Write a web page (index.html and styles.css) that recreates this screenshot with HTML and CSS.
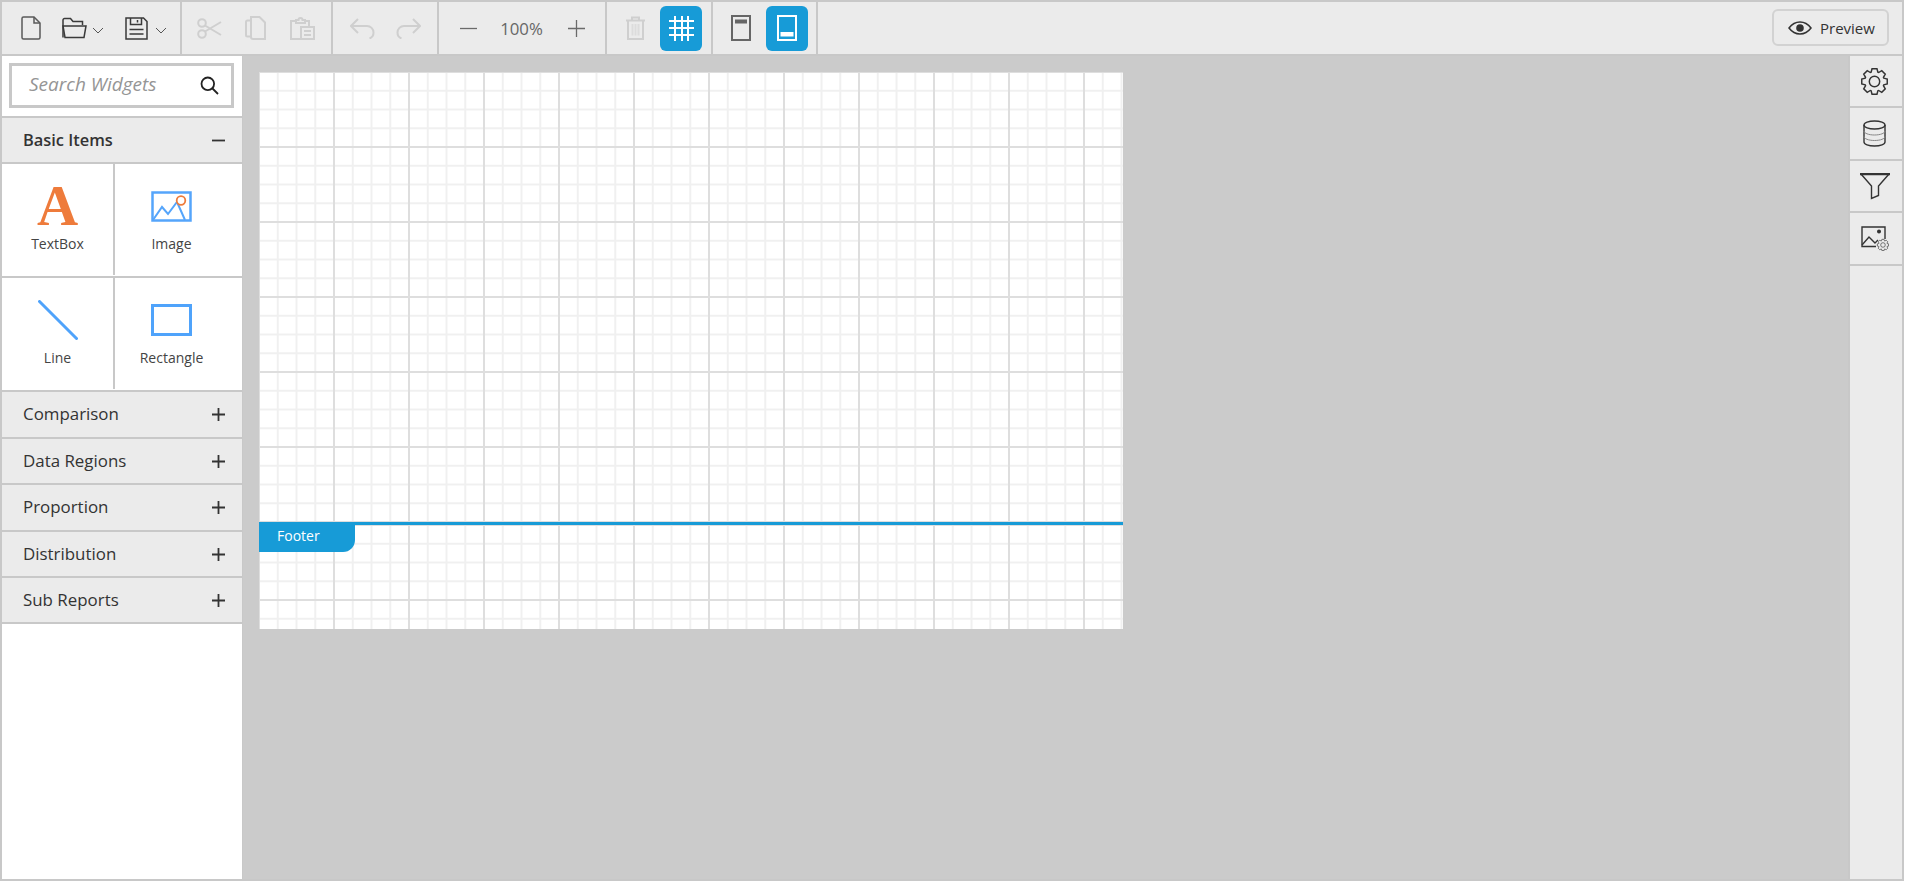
FILE: index.html
```html
<!DOCTYPE html>
<html lang="en">

<head>
    <meta charset="UTF-8">
    <title>Report Designer</title>
    <link rel="stylesheet" href="styles.css">
</head>

<body>
    <div id="app">
        <!--TOOLBAR-->
        <div class="toolbar">
            <div class="tb-group group-file">
                <span class="tb-btn w-new">
                    <svg width="20" height="24" viewBox="0 0 20 24" class="ic-dark"><path d="M2.5 1H13l6 6v14.500a1.500 1.500 0 0 1-1.500 1.500H2.500A1.500 1.500 0 0 1 1 21.500V2.500A1.500 1.500 0 0 1 2.500 1z"/><path d="M13 1v6h6"/></svg>
                </span>
                <span class="tb-btn w-open">
                    <svg width="25" height="22" viewBox="0 0 25 22" class="ic-darker"><path d="M1 20.500V3a1.500 1.500 0 0 1 1.500-1.500h6L11 4.500h9.500V8"/><path d="M1 9h23l-2 11.500H3z"/></svg>
                    <svg width="12" height="7" viewBox="0 0 12 7" class="chev"><path d="M1 1l5 5 5-5"/></svg>
                </span>
                <span class="tb-btn w-save">
                    <svg width="23" height="23" viewBox="0 0 23 23" class="ic-darker"><path d="M1 1h17.500L22 4.500V22H1z"/><path d="M5.500 1v6.500h11V1M12.500 3v2.500"/><path d="M4.500 12.500h14M4.500 17h14"/></svg>
                    <svg width="12" height="7" viewBox="0 0 12 7" class="chev"><path d="M1 1l5 5 5-5"/></svg>
                </span>
            </div>
            <div class="tb-group group-edit">
                <span class="tb-btn w-edit">
                    <svg width="25" height="21" viewBox="0 0 25 21" class="ic-off"><circle cx="5" cy="5" r="3.800"/><circle cx="5" cy="16" r="3.800"/><path d="M8 7.500l16 9.500M8 13.500L24 4"/></svg>
                </span>
                <span class="tb-btn w-edit">
                    <svg width="21" height="24" viewBox="0 0 21 24" class="ic-off"><path d="M6 4.500h-3.500a1.500 1.500 0 0 0-1.500 1.500v13a1.500 1.500 0 0 0 1.500 1.500H6"/><path d="M6 1h8.500L20 6.500V23H8a2 2 0 0 1-2-2z"/></svg>
                </span>
                <span class="tb-btn w-edit">
                    <svg width="25" height="24" viewBox="0 0 25 24" class="ic-off"><path d="M10 23H1V5h5M15 5h4v5"/><path d="M6 7V4h2.500a2 2 0 0 1 4 0H15v3z"/><path d="M11 11h13v12H11zM14 15h7M14 19h7"/></svg>
                </span>
            </div>
            <div class="tb-group group-undo">
                <span class="tb-btn w-edit">
                    <svg width="25" height="21" viewBox="0 0 25 21" class="ic-off"><path d="M8 1L1 8l7 7M1 8h16a6.500 6.500 0 0 1 6.500 6.500c0 3-1.500 5-4 6"/></svg>
                </span>
                <span class="tb-btn w-edit">
                    <svg width="25" height="21" viewBox="0 0 25 21" class="ic-off"><path d="M17 1l7 7-7 7M24 8H8a6.500 6.500 0 0 0-6.500 6.500c0 3 1.500 5 4 6"/></svg>
                </span>
            </div>
            <div class="tb-group group-zoom">
                <span class="tb-btn w-minus">
                    <svg width="17" height="17" viewBox="0 0 17 17" class="ic-mid"><path d="M0 8.500h17"/></svg>
                </span>
                <span class="zoom-value">100%</span>
                <span class="tb-btn w-plus">
                    <svg width="17" height="17" viewBox="0 0 17 17" class="ic-mid"><path d="M0 8.500h17M8.500 0v17"/></svg>
                </span>
            </div>
            <div class="tb-group group-pair">
                <span class="tb-btn w-pair">
                    <svg width="19" height="24" viewBox="0 0 19 24" class="ic-trash"><path d="M0 4.500h19M6 4.500V1.500h7v3M2 4.500V23h15V4.500"/><path class="soft" d="M6.500 8v11.500M9.500 8v11.500M12.500 8v11.500"/></svg>
                </span>
                <span class="tb-btn w-pair active">
                    <svg width="25" height="25" viewBox="0 0 25 25" class="ic-white"><path d="M0 5h25M0 12h25M0 19h25M6 0v25M13 0v25M19 0v25"/></svg>
                </span>
            </div>
            <div class="tb-group group-pair">
                <span class="tb-btn w-pair">
                    <svg width="20" height="26" viewBox="0 0 20 26"><rect x="1" y="1" width="18" height="24" fill="none" stroke="#666" stroke-width="2"/><rect x="4" y="4.500" width="12" height="4" fill="#666"/></svg>
                </span>
                <span class="tb-btn w-pair active">
                    <svg width="20" height="26" viewBox="0 0 20 26"><rect x="1" y="1" width="18" height="24" fill="none" stroke="#fff" stroke-width="2"/><rect x="3.500" y="17" width="13" height="4.500" fill="#fff"/></svg>
                </span>
            </div>
            <div class="preview-btn">
                <svg width="24" height="14" viewBox="0 0 24 14"><path d="M1 7c3-4 7-6 11-6s8 2 11 6c-3 4-7 6-11 6S4 11 1 7z" fill="none" stroke="#333" stroke-width="1.500"/><circle cx="12" cy="7" r="3.800" fill="#333"/></svg>
                <span>Preview</span>
            </div>
        </div>

        <div class="workspace">
            <!--WIDGETS PANEL-->
            <div class="sidebar">
                <div class="search-area">
                    <div class="search-box">
                        <span class="search-text">Search Widgets</span>
                        <svg width="19" height="19" viewBox="0 0 19 19" class="search-icon"><circle cx="7.800" cy="7.800" r="6.300"/><path d="M12.500 12.500l5.500 5.500"/></svg>
                    </div>
                </div>

                <div class="acc-head basic">
                    <span>Basic Items</span>
                    <svg width="13" height="13" viewBox="0 0 13 13" class="acc-icon"><path d="M0 6.500h13"/></svg>
                </div>
                <div class="widget-grid">
                    <div class="widget">
                        <div class="widget-icon"><span class="letter-a">A</span></div>
                        <span>TextBox</span>
                    </div>
                    <div class="widget">
                        <div class="widget-icon">
                            <svg width="41" height="31" viewBox="0 0 41 31"><rect x="1.500" y="1.500" width="38" height="28" fill="none" stroke="#55a5fb" stroke-width="2.500"/><path d="M2 29l9-13 6 7 9-12 8 18" fill="none" stroke="#55a5fb" stroke-width="2"/><circle cx="30" cy="9.500" r="4.300" fill="#fff" stroke="#ee7b3b" stroke-width="1.800"/></svg>
                        </div>
                        <span>Image</span>
                    </div>
                    <div class="widget">
                        <div class="widget-icon">
                            <svg width="40" height="40" viewBox="0 0 40 40"><path d="M1.500 1.500l37 37" stroke="#4fa3fb" stroke-width="3" stroke-linecap="round"/></svg>
                        </div>
                        <span>Line</span>
                    </div>
                    <div class="widget">
                        <div class="widget-icon">
                            <svg width="41" height="32" viewBox="0 0 41 32"><rect x="1.500" y="1.500" width="38" height="29" fill="none" stroke="#4fa3fb" stroke-width="3"/></svg>
                        </div>
                        <span>Rectangle</span>
                    </div>
                </div>

                <div class="acc-head h45">
                    <span>Comparison</span>
                    <svg width="13" height="13" viewBox="0 0 13 13" class="acc-icon"><path d="M0 6.500h13M6.500 0v13"/></svg>
                </div>
                <div class="acc-head h44">
                    <span>Data Regions</span>
                    <svg width="13" height="13" viewBox="0 0 13 13" class="acc-icon"><path d="M0 6.500h13M6.500 0v13"/></svg>
                </div>
                <div class="acc-head h45">
                    <span>Proportion</span>
                    <svg width="13" height="13" viewBox="0 0 13 13" class="acc-icon"><path d="M0 6.500h13M6.500 0v13"/></svg>
                </div>
                <div class="acc-head h44">
                    <span>Distribution</span>
                    <svg width="13" height="13" viewBox="0 0 13 13" class="acc-icon"><path d="M0 6.500h13M6.500 0v13"/></svg>
                </div>
                <div class="acc-head h44">
                    <span>Sub Reports</span>
                    <svg width="13" height="13" viewBox="0 0 13 13" class="acc-icon"><path d="M0 6.500h13M6.500 0v13"/></svg>
                </div>
            </div>

            <!--REPORT CANVAS-->
            <div class="canvas-area">
                <div class="report">
                    <div class="report-body"></div>
                    <div class="report-footer">
                        <div class="footer-tab">Footer</div>
                    </div>
                </div>
            </div>

            <!--RIGHT PANEL-->
            <div class="right-panel">
                <div class="rp-item h50">
                    <svg width="27" height="27" viewBox="0 0 26 26" class="ic-line"><g id="gear"><polygon transform="translate(13 13)" points="8.930,-3.250 12.270,-2.390 12.270,2.390 8.930,3.250 8.610,4.010 10.360,6.990 6.990,10.360 4.010,8.610 3.250,8.930 2.390,12.270 -2.390,12.270 -3.250,8.930 -4.010,8.610 -6.990,10.360 -10.360,6.990 -8.610,4.010 -8.930,3.250 -12.270,2.390 -12.270,-2.390 -8.930,-3.250 -8.610,-4.010 -10.360,-6.990 -6.990,-10.360 -4.010,-8.610 -3.250,-8.930 -2.390,-12.270 2.390,-12.270 3.250,-8.930 4.010,-8.610 6.990,-10.360 10.360,-6.990 8.610,-4.010"/><circle cx="13" cy="13" r="5"/></g></svg>
                </div>
                <div class="rp-item h51">
                    <svg width="23" height="27" viewBox="0 0 23 27" class="ic-line"><path d="M1 5v17c0 2.200 4.500 4 10.500 4S22 24.200 22 22V5"/><ellipse cx="11.500" cy="5" rx="10.500" ry="4"/><path class="soft" d="M1 11c0 2.200 4.500 4 10.500 4S22 13.200 22 11M1 16.500c0 2.200 4.500 4 10.500 4S22 18.700 22 16.500"/></svg>
                </div>
                <div class="rp-item h50">
                    <svg width="30" height="27" viewBox="0 0 30 27" class="ic-line"><path d="M1 1h28L18.500 13v9.500L11.500 25.500V13z"/><path d="M0 1h30" stroke-width="2.500"/></svg>
                </div>
                <div class="rp-item h51">
                    <svg width="28" height="25" viewBox="0 0 28 25" class="ic-line"><path d="M15 20.500H1V1h23v12"/><path d="M1 19l7-8 6 6 3-3"/><circle cx="18" cy="5.500" r="1.300" fill="#333"/><use href="#gear" transform="translate(16 13) scale(.46)"/></svg>
                </div>
            </div>
        </div>
    </div>
</body>

</html>
```
FILE: styles.css
```css
* {
    margin: 0;
    padding: 0;
    box-sizing: border-box;
}

body {
    background: #fff;
    font-family: "Open Sans", sans-serif;
    color: #333;
}

#app {
    width: 1904px;
    height: 881px;
    border: 2px solid #c8c8c8;
    display: flex;
    flex-direction: column;
}

/* TOOLBAR */
.toolbar {
    height: 54px;
    flex-shrink: 0;
    display: flex;
    background: #ebebeb;
    border-bottom: 2px solid #c8c8c8;
}

.tb-group {
    display: flex;
    align-items: center;
    border-right: 2px solid #c8c8c8;
}

.group-file {
    width: 180px;
    padding-left: 8px;
}

.group-edit {
    width: 151px;
    padding-left: 4px;
}

.group-undo {
    width: 106px;
    padding-left: 6px;
}

.group-zoom {
    width: 168px;
    padding-left: 6px;
}

.group-pair {
    width: 106px;
    padding-left: 7px;
    gap: 4px;
}

.group-pair + .group-pair {
    width: 105px;
}

.tb-btn {
    display: flex;
    align-items: center;
    justify-content: center;
    height: 45px;
    border-radius: 6px;
}

.w-new {
    width: 41px;
}

.w-open {
    width: 64px;
    gap: 5px;
}

.w-save {
    width: 61px;
    gap: 7px;
}

.w-edit {
    width: 46.5px;
}

.w-minus {
    width: 47px;
}

.w-plus {
    width: 51px;
}

.w-pair {
    width: 42px;
}

.tb-btn.active {
    background: #179bd7;
}

.zoom-value {
    width: 59px;
    text-align: center;
    font-size: 16.800px;
    color: #666;
}

.chev {
    margin-top: 4px;
    fill: none;
    stroke: #555;
    stroke-width: 1;
}

.ic-dark,
.ic-darker,
.ic-off,
.ic-mid,
.ic-white,
.ic-line,
.ic-trash,
.search-icon,
.acc-icon {
    fill: none;
    stroke-width: 1.5;
}

.ic-dark {
    stroke: #5a5a5a;
}

.ic-darker {
    stroke: #3a3a3a;
}

.ic-off {
    stroke: #cfcfcf;
    stroke-width: 2;
}

.ic-trash {
    stroke: #cfcfcf;
    stroke-width: 2;
}

.ic-trash .soft {
    stroke: #dcdcdc;
}

.ic-mid {
    stroke: #6a6a6a;
    stroke-width: 1.3;
}

.ic-white {
    stroke: #fff;
    stroke-width: 2;
}

.ic-line {
    stroke: #333;
    stroke-width: 1.4;
}

.ic-line .soft {
    stroke: #888;
    stroke-width: 1;
}

.preview-btn {
    margin: 7px 13px 0 auto;
    width: 117px;
    height: 37px;
    border: 2px solid #d2d2d2;
    border-radius: 6px;
    display: flex;
    align-items: center;
    gap: 8px;
    padding-left: 14px;
    font-size: 15px;
}

/* AREA ABAIXO DA TOOLBAR */
.workspace {
    flex: 1;
    display: flex;
    min-height: 0;
}

.sidebar {
    width: 241px;
    flex-shrink: 0;
    background: #fff;
    border-right: 1px solid #c8c8c8;
}

.search-area {
    height: 62px;
    padding: 7px 8px 0 7px;
    border-bottom: 2px solid #c8c8c8;
}

.search-box {
    width: 225px;
    height: 45px;
    border: 3px solid #c8c8c8;
    display: flex;
    align-items: center;
    justify-content: space-between;
    padding: 0 12px 0 17px;
}

.search-text {
    font-style: italic;
    font-size: 19px;
    color: #959595;
    margin-top: -3px;
}

.search-icon {
    stroke: #222;
    stroke-width: 1.8;
}

.acc-head {
    display: flex;
    align-items: center;
    justify-content: space-between;
    padding: 0 17px 0 21px;
    background: #ebebeb;
    border-bottom: 2px solid #c8c8c8;
    font-size: 16.900px;
}

.acc-head span {
    margin-top: -2px;
}

.acc-head.basic {
    height: 46px;
    font-size: 16.400px;
    font-weight: 600;
}

.h45 {
    height: 47px;
}

.h44 {
    height: 46px;
}

.acc-icon {
    stroke: #333;
    stroke-width: 1.8;
}

/* GRADE DE WIDGETS */
.widget-grid {
    display: grid;
    grid-template-columns: 113px 127px;
    grid-auto-rows: 114px;
}

.widget {
    display: flex;
    flex-direction: column;
    align-items: center;
    border-bottom: 2px solid #c8c8c8;
    padding: 20px 14px 0 0;
    font-size: 14px;
    color: #444;
}

.widget span:last-child {
    margin-top: -1px;
}

.widget:nth-child(odd) {
    position: relative;
    width: 113px;
    padding-right: 2px;
}

.widget:nth-child(odd)::after {
    content: "";
    position: absolute;
    left: 111px;
    top: 0;
    bottom: 1px;
    width: 2px;
    background: #c8c8c8;
}

.widget-icon {
    height: 44px;
    margin-bottom: 7px;
    display: flex;
    align-items: center;
    justify-content: center;
}

.letter-a {
    font-family: "Liberation Serif", serif;
    font-weight: 700;
    font-size: 57px;
    line-height: 44px;
    color: #ee7b3b;
}

/* CANVAS */
.canvas-area {
    flex: 1;
    background: #cbcbcb;
    padding: 16px 0 0 16px;
}

.report {
    width: 864px;
    display: flex;
    flex-direction: column;
}

.report-body,
.report-footer {
    background-color: #fff;
    background-image:
        linear-gradient(to right, transparent 73px, #dedede 73px),
        linear-gradient(to bottom, transparent 73px, #dedede 73px),
        linear-gradient(to right, transparent 16.750px, #f0f0f0 16.750px),
        linear-gradient(to bottom, transparent 16.750px, #f0f0f0 16.750px);
    background-size: 75px 75px, 75px 75px, 18.750px 18.750px, 18.750px 18.750px;
    background-position: 1px 1px;
}

.report-body {
    height: 450px;
}

.report-footer {
    position: relative;
    height: 107px;
    border-top: 3px solid #179bd7;
    background-origin: padding-box;
}

.footer-tab {
    position: absolute;
    left: 0;
    top: -3px;
    width: 96px;
    height: 30px;
    background: #179bd7;
    border-radius: 0 0 12px 0;
    color: #fff;
    font-size: 14px;
    line-height: 28px;
    padding-left: 18px;
}

/* PAINEL DIREITO */
.right-panel {
    width: 54px;
    flex-shrink: 0;
    background: #ebebeb;
    border-left: 2px solid #c8c8c8;
}

.rp-item {
    display: flex;
    align-items: center;
    justify-content: center;
    padding-right: 3px;
    border-bottom: 2px solid #c8c8c8;
}

.h50 {
    height: 52px;
}

.h51 {
    height: 53px;
}
```
